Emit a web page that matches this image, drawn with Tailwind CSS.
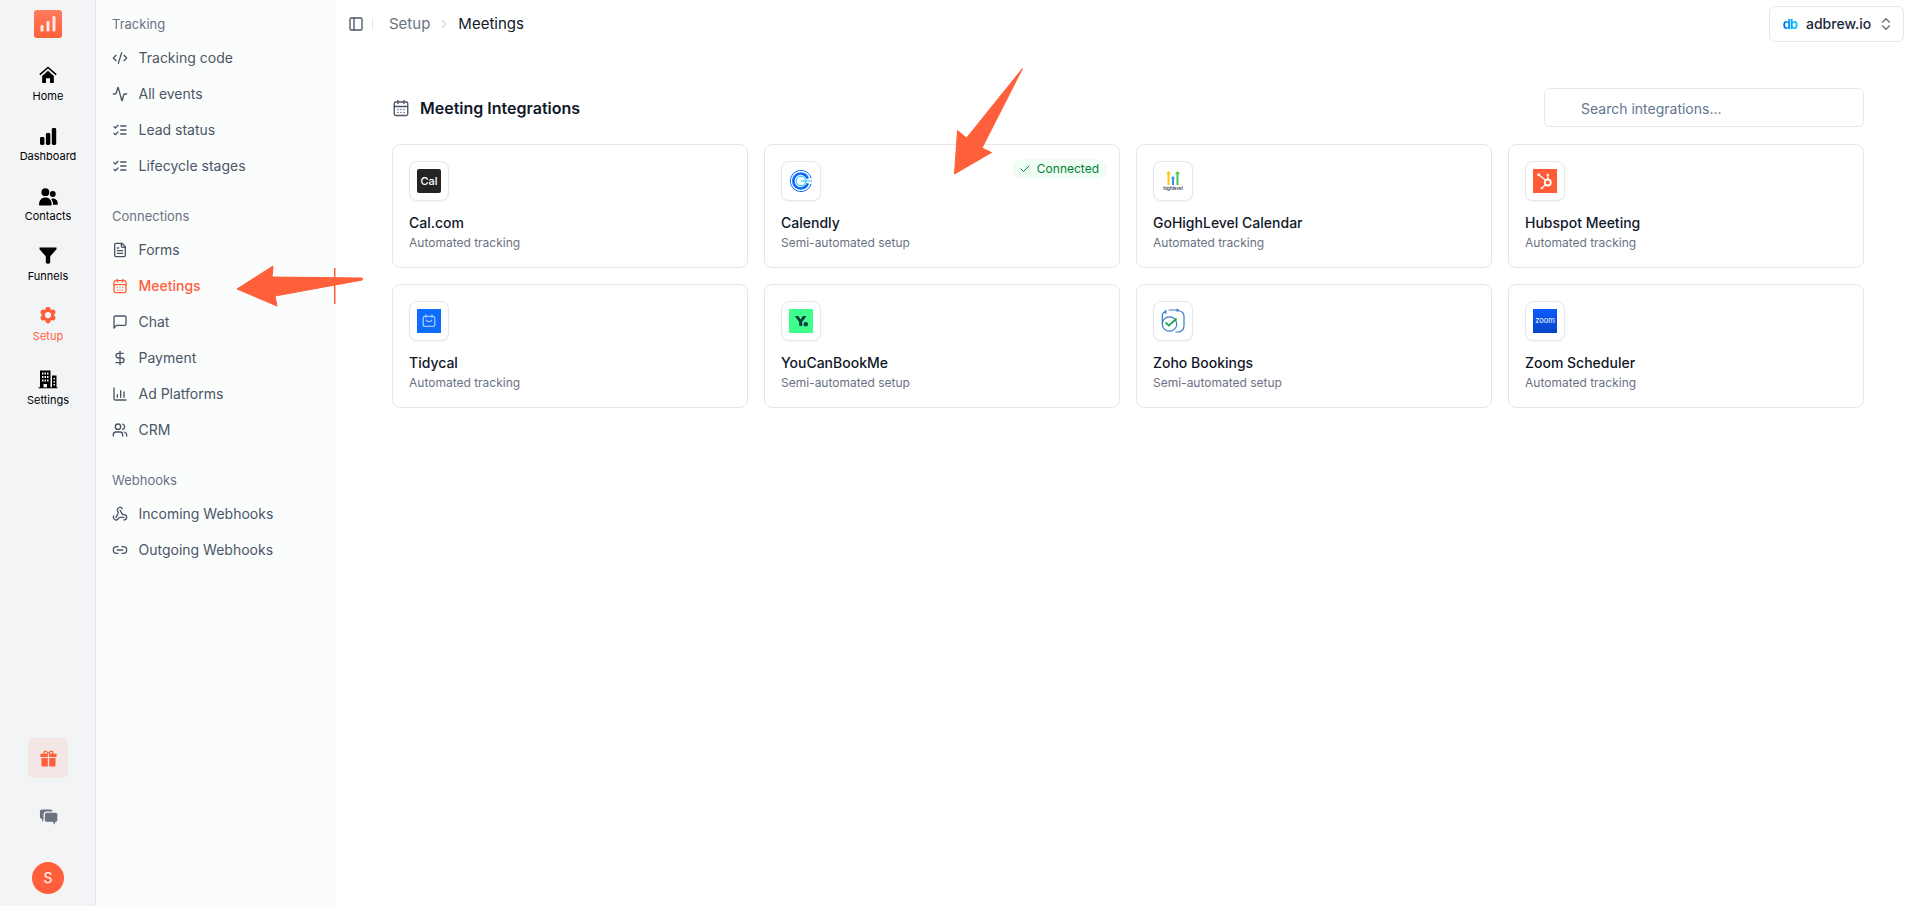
<!DOCTYPE html>
<html lang="en">
<head>
<meta charset="utf-8">
<title>Meetings</title>
<script src="https://cdn.jsdelivr.net/npm/@tailwindcss/browser@4"></script>
</head>
<body class="font-['Inter',sans-serif] bg-white text-gray-900">
<div class="relative flex h-[906px] w-[1920px] overflow-hidden">

  <!-- Icon rail -->
  <aside class="flex h-full w-24 shrink-0 flex-col items-center border-r border-gray-200 bg-[#f3f4f6] pt-[10px] pb-3 pl-px">
    <div class="flex h-7 w-7 items-center justify-center rounded-[3px] bg-linear-to-b from-[#ff7a5c] to-[#ff5f3a]">
      <svg viewBox="0 0 18 18" class="h-[18px] w-[18px]" fill="#ffe9e2"><rect x="1.500" y="10" width="3" height="6.500" rx="1.300"/><rect x="7.500" y="6" width="3" height="10.500" rx="1.300"/><rect x="13.500" y="1" width="3" height="15.500" rx="1.300"/></svg>
    </div>
    <nav class="mt-[27px] flex flex-col items-center text-[11px] leading-4 text-black">
      <a class="flex h-[60px] w-[90px] flex-col items-center">
        <svg viewBox="0 0 24 24" class="h-5 w-5"><path d="M2.200 11.600 12 3l9.800 8.600" fill="none" stroke="#000" stroke-width="1.900"/><path d="M5 13.200 12 7l7 6.200V21.500h-4.600v-5.700H9.600v5.700H5Z"/></svg>
        <span class="mt-[3px]">Home</span>
      </a>
      <a class="flex h-[60px] w-[90px] flex-col items-center">
        <svg viewBox="0 0 20 20" class="mt-0.5 h-5 w-5"><rect x="2" y="10" width="4.400" height="8" rx="1.400"/><rect x="7.900" y="6" width="4.400" height="12" rx="1.400"/><rect x="13.800" y="1" width="4.400" height="17" rx="1.400"/></svg>
        <span class="mt-px">Dashboard</span>
      </a>
      <a class="flex h-[60px] w-[90px] flex-col items-center">
        <svg viewBox="0 0 20 20" class="mt-0.5 h-5 w-5"><circle cx="7.400" cy="5.200" r="3.900"/><circle cx="14.800" cy="7" r="2.900"/><path d="M1 17.600c0-4.400 2.600-7.100 6.400-7.100s6.300 2.700 6.300 7.100c0 .6-.4 1-1 1H2c-.6 0-1-.4-1-1Z"/><path d="M15 17.800h4c.4 0 .8-.3.8-.8 0-3.200-1.800-5.500-4.600-5.500-.8 0-1.500.2-2.100.5 1.300 1.400 2 3.300 2 5.300Z"/></svg>
        <span class="mt-px">Contacts</span>
      </a>
      <a class="flex h-[60px] w-[90px] flex-col items-center">
        <svg viewBox="0 0 20 20" class="h-5 w-5"><path d="M1.500 2.500h17v1.800l-6.300 7v6.200l-1.300 1.200H9.100l-1.300-1.200v-6.200l-6.300-7Z"/></svg>
        <span class="mt-[3px]">Funnels</span>
      </a>
      <a class="flex h-[60px] w-[90px] flex-col items-center text-[#ff5f3a]">
        <svg viewBox="0 0 24 24" class="h-5 w-5" fill="#ff5f3a"><path fill-rule="evenodd" clip-rule="evenodd" d="M11.078 2.250c-.917 0-1.699.663-1.850 1.567L9.050 4.889c-.02.12-.115.26-.297.348a7.493 7.493 0 0 0-.986.57c-.166.115-.334.126-.45.083L6.300 5.508a1.875 1.875 0 0 0-2.282.819l-.922 1.597a1.875 1.875 0 0 0 .432 2.385l.84.692c.095.078.17.229.154.43a7.598 7.598 0 0 0 0 1.139c.015.2-.059.352-.153.43l-.841.692a1.875 1.875 0 0 0-.432 2.385l.922 1.597a1.875 1.875 0 0 0 2.282.818l1.019-.382c.115-.043.283-.031.45.082.312.214.641.405.985.57.182.088.277.228.297.35l.178 1.071c.151.904.933 1.567 1.850 1.567h1.844c.916 0 1.699-.663 1.850-1.567l.178-1.072c.02-.12.114-.26.297-.349.344-.165.673-.356.985-.57.167-.114.335-.125.45-.082l1.020.382a1.875 1.875 0 0 0 2.280-.819l.923-1.597a1.875 1.875 0 0 0-.432-2.385l-.84-.692c-.095-.078-.17-.229-.154-.43a7.614 7.614 0 0 0 0-1.139c-.016-.2.059-.352.153-.43l.84-.692c.708-.582.891-1.590.433-2.385l-.922-1.597a1.875 1.875 0 0 0-2.282-.818l-1.020.382c-.114.043-.282.031-.449-.083a7.490 7.490 0 0 0-.985-.57c-.183-.087-.277-.227-.297-.348l-.179-1.072a1.875 1.875 0 0 0-1.850-1.567h-1.843ZM12 15.750a3.750 3.750 0 1 0 0-7.500 3.750 3.750 0 0 0 0 7.500Z"/></svg>
        <span class="mt-[3px]">Setup</span>
      </a>
      <a class="mt-1 flex h-[60px] w-[90px] flex-col items-center">
        <svg viewBox="0 0 20 20" class="h-5 w-5"><path fill-rule="evenodd" d="M2 1.500h10.500V19H2ZM4 3.500v2h1.500v-2Zm2.500 0v2H8v-2Zm2.500 0v2h1.500v-2ZM4 7v2h1.500V7Zm2.500 0v2H8V7ZM9 7v2h1.500V7ZM4 10.500v2h1.500v-2Zm2.500 0v2H8v-2Zm2.500 0v2h1.500v-2ZM5.500 15v4h3.500v-4Z"/><path fill-rule="evenodd" d="M14 6.500h4.500V19H14Zm1.500 2.500v1.500h1.500V9Zm0 3v1.500h1.500V12Zm0 3v1.500h1.500V15Z"/><rect x=".5" y="18.300" width="19" height="1"/></svg>
        <span class="mt-[3px]">Settings</span>
      </a>
    </nav>
    <div class="mt-auto flex h-10 w-10 items-center justify-center rounded-md bg-[#f5e6e6]">
      <svg viewBox="0 0 20 20" class="h-[19px] w-[19px]" fill="#ff5f3a"><path d="M6.800 1.500C5.300 1.500 4.500 2.700 4.700 3.900c.1.400.2.700.4 1H1.500v3.400h7.800V5h1.400v3.300h7.800V4.900h-3.600c.2-.3.300-.6.400-1 .2-1.200-.6-2.400-2.100-2.400-1.400 0-2.600 1-3.700 2.700C8.900 2.500 8.200 1.500 6.800 1.500Zm0 1.500c.6 0 1.300.6 2 1.900H6.900c-.5 0-.8-.4-.8-1 0-.5.200-.9.700-.9Zm6.400 0c.5 0 .7.400.7.900 0 .6-.3 1-.8 1h-1.900c.7-1.300 1.400-1.900 2-1.900Z"/><path d="M2.600 9.500h6.700V18.500H4.300c-1 0-1.700-.7-1.700-1.700Zm8.100 0h6.700v7.300c0 1-.7 1.700-1.700 1.700h-5Z"/></svg>
    </div>
    <div class="mt-[19px] flex h-10 w-10 items-center justify-center">
      <svg viewBox="0 0 20 20" class="h-[19px] w-[19px]" fill="#6b7280"><path d="M3 1.500h9c1.300 0 2.300 1 2.300 2.200H8c-1.800 0-3.200 1.400-3.200 3.100v5.400l-1 2.800-.7-3.300C1.800 11.600 1 10.700 1 9.600V3.600c0-1.200.9-2.100 2-2.100Z"/><path d="M8 5h9.500c1 0 1.800.8 1.800 1.800v6c0 1-.8 1.800-1.800 1.800h-.5l-.4 2.900-2.400-2.900H8c-1 0-1.800-.8-1.800-1.800v-6C6.200 5.800 7 5 8 5Z"/></svg>
    </div>
    <div class="mt-[25px] flex h-8 w-8 items-center justify-center rounded-full bg-[#ff5f3a] text-sm text-white">S</div>
  </aside>

  <!-- Section sidebar -->
  <aside class="h-full w-[240px] shrink-0 bg-[#fbfdfd] px-4 pt-[14px] text-sm text-gray-600">
    <p class="mb-1.5 h-5 text-[13px] leading-5 text-gray-500">Tracking</p>
    <a class="flex h-9 items-center gap-[10.500px]"><svg viewBox="0 0 24 24" class="h-4 w-4" fill="none" stroke="currentColor" stroke-width="2" stroke-linecap="round" stroke-linejoin="round"><path d="m18 16 4-4-4-4"/><path d="m6 8-4 4 4 4"/><path d="m14.500 4-5 16"/></svg>Tracking code</a>
    <a class="flex h-9 items-center gap-[10.500px]"><svg viewBox="0 0 24 24" class="h-4 w-4" fill="none" stroke="currentColor" stroke-width="2" stroke-linecap="round" stroke-linejoin="round"><path d="M22 12h-2.480a2 2 0 0 0-1.930 1.460l-2.350 8.360a.25.25 0 0 1-.480 0L9.240 2.180a.25.25 0 0 0-.480 0l-2.350 8.360A2 2 0 0 1 4.490 12H2"/></svg>All events</a>
    <a class="flex h-9 items-center gap-[10.500px]"><svg viewBox="0 0 24 24" class="h-4 w-4" fill="none" stroke="currentColor" stroke-width="2" stroke-linecap="round" stroke-linejoin="round"><path d="m3 17 2 2 4-4"/><path d="m3 7 2 2 4-4"/><path d="M13 6h8"/><path d="M13 12h8"/><path d="M13 18h8"/></svg>Lead status</a>
    <a class="flex h-9 items-center gap-[10.500px]"><svg viewBox="0 0 24 24" class="h-4 w-4" fill="none" stroke="currentColor" stroke-width="2" stroke-linecap="round" stroke-linejoin="round"><path d="m3 17 2 2 4-4"/><path d="m3 7 2 2 4-4"/><path d="M13 6h8"/><path d="M13 12h8"/><path d="M13 18h8"/></svg>Lifecycle stages</a>

    <p class="mt-[22px] mb-1.5 h-5 text-[13px] leading-5 text-gray-500">Connections</p>
    <a class="flex h-9 items-center gap-[10.500px]"><svg viewBox="0 0 24 24" class="h-4 w-4" fill="none" stroke="currentColor" stroke-width="2" stroke-linecap="round" stroke-linejoin="round"><path d="M15 2H6a2 2 0 0 0-2 2v16a2 2 0 0 0 2 2h12a2 2 0 0 0 2-2V7Z"/><path d="M14 2v4a2 2 0 0 0 2 2h4"/><path d="M10 9H8"/><path d="M16 13H8"/><path d="M16 17H8"/></svg>Forms</a>
    <a class="flex h-9 items-center gap-[10.500px] font-medium text-[#ff5f3a]"><svg viewBox="0 0 24 24" class="h-4 w-4" fill="none" stroke="currentColor" stroke-width="2" stroke-linecap="round" stroke-linejoin="round"><path d="M8 2v4"/><path d="M16 2v4"/><rect x="3" y="4" width="18" height="18" rx="2"/><path d="M3 10h18"/><path d="M8 14h.01"/><path d="M12 14h.01"/><path d="M16 14h.01"/><path d="M8 18h.01"/><path d="M12 18h.01"/><path d="M16 18h.01"/></svg>Meetings</a>
    <a class="flex h-9 items-center gap-[10.500px]"><svg viewBox="0 0 24 24" class="h-4 w-4" fill="none" stroke="currentColor" stroke-width="2" stroke-linecap="round" stroke-linejoin="round"><path d="M21 15a2 2 0 0 1-2 2H7l-4 4V5a2 2 0 0 1 2-2h14a2 2 0 0 1 2 2z"/></svg>Chat</a>
    <a class="flex h-9 items-center gap-[10.500px]"><svg viewBox="0 0 24 24" class="h-4 w-4" fill="none" stroke="currentColor" stroke-width="2" stroke-linecap="round" stroke-linejoin="round"><path d="M12 2v20"/><path d="M17 5H9.500a3.500 3.500 0 0 0 0 7h5a3.500 3.500 0 0 1 0 7H6"/></svg>Payment</a>
    <a class="flex h-9 items-center gap-[10.500px]"><svg viewBox="0 0 24 24" class="h-4 w-4" fill="none" stroke="currentColor" stroke-width="2" stroke-linecap="round" stroke-linejoin="round"><path d="M3 3v16a2 2 0 0 0 2 2h16"/><path d="M18 17V9"/><path d="M13 17V7"/><path d="M8 17v-4"/></svg>Ad Platforms</a>
    <a class="flex h-9 items-center gap-[10.500px]"><svg viewBox="0 0 24 24" class="h-4 w-4" fill="none" stroke="currentColor" stroke-width="2" stroke-linecap="round" stroke-linejoin="round"><path d="M16 21v-2a4 4 0 0 0-4-4H6a4 4 0 0 0-4 4v2"/><circle cx="9" cy="7" r="4"/><path d="M22 21v-2a4 4 0 0 0-3-3.870"/><path d="M16 3.130a4 4 0 0 1 0 7.750"/></svg>CRM</a>

    <p class="mt-[22px] mb-1.5 h-5 text-[13px] leading-5 text-gray-500">Webhooks</p>
    <a class="flex h-9 items-center gap-[10.500px]"><svg viewBox="0 0 24 24" class="h-4 w-4" fill="none" stroke="currentColor" stroke-width="2" stroke-linecap="round" stroke-linejoin="round"><path d="M18 16.980h-5.990c-1.100 0-1.950.940-2.480 1.900A4 4 0 0 1 2 17c.010-.700.200-1.400.570-2"/><path d="m6 17 3.130-5.780c.530-.970.100-2.180-.500-3.100a4 4 0 1 1 6.890-4.060"/><path d="m12 6 3.130 5.730C15.660 12.700 16.900 13 18 13a4 4 0 0 1 0 8"/></svg>Incoming Webhooks</a>
    <a class="flex h-9 items-center gap-[10.500px]"><svg viewBox="0 0 24 24" class="h-4 w-4" fill="none" stroke="currentColor" stroke-width="2" stroke-linecap="round" stroke-linejoin="round"><path d="M9 17H7A5 5 0 0 1 7 7h2"/><path d="M15 7h2a5 5 0 1 1 0 10h-2"/><path d="M8 12h8"/></svg>Outgoing Webhooks</a>
  </aside>

  <!-- Main -->
  <main class="min-w-0 flex-1 bg-white">
    <header class="flex h-12 items-center pl-3 pr-4">
      <svg viewBox="0 0 24 24" class="h-4 w-4 text-gray-600" fill="none" stroke="currentColor" stroke-width="2" stroke-linecap="round" stroke-linejoin="round"><rect x="3" y="3" width="18" height="18" rx="2"/><path d="M9 3v18"/></svg>
      <span class="ml-2 h-3 w-px bg-gray-200"></span>
      <span class="ml-4 text-[15px] text-gray-500">Setup</span>
      <svg viewBox="0 0 24 24" class="ml-[7px] h-[14px] w-[14px] text-gray-300" fill="none" stroke="currentColor" stroke-width="2" stroke-linecap="round" stroke-linejoin="round"><path d="m9 18 6-6-6-6"/></svg>
      <span class="ml-[7px] text-[15px] text-gray-900">Meetings</span>
      <button class="ml-auto flex h-9 w-[135px] items-center rounded-md border border-gray-200 bg-white pl-[12px] pr-2 text-sm font-medium text-gray-800">
        <span class="w-[16px] bg-linear-to-r from-blue-600 to-cyan-400 bg-clip-text text-[13px] font-bold tracking-[-1px] text-transparent">db</span>
        <span class="ml-[8px]">adbrew.io</span>
        <svg viewBox="0 0 24 24" class="ml-[7px] h-4 w-4 text-gray-500" fill="none" stroke="currentColor" stroke-width="2" stroke-linecap="round" stroke-linejoin="round"><path d="m7 15 5 5 5-5"/><path d="m7 9 5-5 5 5"/></svg>
      </button>
    </header>

    <div class="px-14 pt-10">
      <div class="mb-[17px] flex h-[39px] items-center justify-between">
        <div class="flex items-center gap-2.5">
          <svg viewBox="0 0 24 24" class="h-[18px] w-[18px] text-gray-600" fill="none" stroke="currentColor" stroke-width="1.750" stroke-linecap="round" stroke-linejoin="round"><path d="M8 2v4"/><path d="M16 2v4"/><rect x="3" y="4" width="18" height="18" rx="2"/><path d="M3 10h18"/><path d="M8 14h.01"/><path d="M12 14h.01"/><path d="M16 14h.01"/><path d="M8 18h.01"/><path d="M12 18h.01"/><path d="M16 18h.01"/></svg>
          <h1 class="text-base font-semibold text-gray-900">Meeting Integrations</h1>
        </div>
        <input type="text" placeholder="Search integrations..." class="h-[39px] w-[320px] rounded-md border border-gray-200 bg-white pl-9 pt-[2px] text-sm outline-none placeholder:text-slate-500">
      </div>

      <div class="grid grid-cols-4 gap-x-4 gap-y-[16.500px]">
        <!-- Cal.com -->
        <div class="h-[123.500px] rounded-lg border border-gray-200 bg-white px-4 pt-4">
          <div class="flex h-10 w-10 items-center justify-center rounded-lg border border-gray-200 bg-white shadow-xs">
            <span class="flex h-6 w-6 items-center justify-center rounded-[2px] bg-[#242424] text-[11px] font-medium text-white">Cal</span>
          </div>
          <p class="mt-3 text-sm font-medium text-gray-900">Cal.com</p>
          <p class="mt-0.5 text-xs text-gray-500">Automated tracking</p>
        </div>
        <!-- Calendly -->
        <div class="relative h-[123.500px] rounded-lg border border-gray-200 bg-white px-4 pt-4">
          <div class="flex h-10 w-10 items-center justify-center rounded-lg border border-gray-200 bg-white shadow-xs">
            <svg viewBox="0 0 24 24" class="h-6 w-6" fill="none"><path d="M22.200 9.300A10.600 10.600 0 1 0 22.200 14.700" stroke="#0b6bff" stroke-width="1"/><path d="M18.800 9.700A7.400 7.400 0 1 0 18.800 14.300" stroke="#0b6bff" stroke-width="2.600"/><circle cx="12" cy="12" r="4.800" stroke="#12c8f0" stroke-width="1"/><path d="M12 12h11" stroke="#12c8f0" stroke-width="1"/></svg>
          </div>
          <span class="absolute right-3 top-3.5 flex h-5 items-center gap-1.5 rounded-full bg-[#f0fdf4] pl-[7px] pr-2 text-xs text-green-700">
            <svg viewBox="0 0 24 24" class="h-3 w-3" fill="none" stroke="currentColor" stroke-width="2" stroke-linecap="round" stroke-linejoin="round"><path d="M20 6 9 17l-5-5"/></svg>Connected</span>
          <p class="mt-3 text-sm font-medium text-gray-900">Calendly</p>
          <p class="mt-0.5 text-xs text-gray-500">Semi-automated setup</p>
        </div>
        <!-- GoHighLevel -->
        <div class="h-[123.500px] rounded-lg border border-gray-200 bg-white px-4 pt-4">
          <div class="flex h-10 w-10 flex-col items-center justify-center rounded-lg border border-gray-200 bg-white shadow-xs">
            <svg viewBox="0 0 16 14" class="h-[14px] w-[16px]"><path d="M3.500 0 6 3H4.500v11h-2V3H1Z" fill="#fdc20f"/><path d="M12.500 0 15 3h-1.500v11h-2V3H10Z" fill="#4fc24a"/><path d="M8 5l2.300 2.600H9V14H7V7.600H5.700Z" fill="#3f8ef5"/></svg>
            <span class="mt-px text-[4.500px] leading-[6px] font-semibold text-gray-700">highlevel</span>
          </div>
          <p class="mt-3 text-sm font-medium text-gray-900">GoHighLevel Calendar</p>
          <p class="mt-0.5 text-xs text-gray-500">Automated tracking</p>
        </div>
        <!-- Hubspot -->
        <div class="h-[123.500px] rounded-lg border border-gray-200 bg-white px-4 pt-4">
          <div class="flex h-10 w-10 items-center justify-center rounded-lg border border-gray-200 bg-white shadow-xs">
            <span class="flex h-6 w-6 items-center justify-center bg-[#ff5c35]">
              <svg viewBox="0 0 24 24" class="h-6 w-6" fill="none" stroke="#fff"><circle cx="14.800" cy="13.500" r="3" stroke-width="1.800"/><path d="M6 6l6.700 5.300M14.800 6.500v4M12.500 15.800 9 19" stroke-width="1.200"/><circle cx="5.800" cy="5.800" r="1.500" fill="#fff" stroke="none"/><circle cx="14.800" cy="6" r="1.200" fill="#fff" stroke="none"/><circle cx="8.800" cy="19.200" r="1.100" fill="#fff" stroke="none"/></svg>
            </span>
          </div>
          <p class="mt-3 text-sm font-medium text-gray-900">Hubspot Meeting</p>
          <p class="mt-0.5 text-xs text-gray-500">Automated tracking</p>
        </div>
        <!-- Tidycal -->
        <div class="h-[123.500px] rounded-lg border border-gray-200 bg-white px-4 pt-4">
          <div class="flex h-10 w-10 items-center justify-center rounded-lg border border-gray-200 bg-white shadow-xs">
            <span class="flex h-6 w-6 items-center justify-center bg-[#0c6cff]">
              <svg viewBox="0 0 24 24" class="h-6 w-6" fill="none" stroke="#a9c8ff" stroke-width="1.300" stroke-linecap="round"><rect x="6.200" y="7.400" width="11.600" height="10" rx="1.600"/><path d="M9 6v2.200M15 6v2.200M9.300 11.200c.8 1.800 4.600 1.800 5.400 0"/></svg>
            </span>
          </div>
          <p class="mt-3 text-sm font-medium text-gray-900">Tidycal</p>
          <p class="mt-0.5 text-xs text-gray-500">Automated tracking</p>
        </div>
        <!-- YouCanBookMe -->
        <div class="h-[123.500px] rounded-lg border border-gray-200 bg-white px-4 pt-4">
          <div class="flex h-10 w-10 items-center justify-center rounded-lg border border-gray-200 bg-white shadow-xs">
            <span class="flex h-6 w-6 items-center justify-center bg-[#3fff8c]">
              <svg viewBox="0 0 24 24" class="h-6 w-6" fill="#0c3b3f"><path d="M5.800 7h3.500l2.400 3.600L14 7h3.500l-4.300 6v4h-3v-4Z"/><circle cx="16.800" cy="15.200" r="2.200"/></svg>
            </span>
          </div>
          <p class="mt-3 text-sm font-medium text-gray-900">YouCanBookMe</p>
          <p class="mt-0.5 text-xs text-gray-500">Semi-automated setup</p>
        </div>
        <!-- Zoho -->
        <div class="h-[123.500px] rounded-lg border border-gray-200 bg-white px-4 pt-4">
          <div class="flex h-10 w-10 items-center justify-center rounded-lg border border-gray-200 bg-white shadow-xs">
            <svg viewBox="0 0 24 24" class="h-6 w-6" fill="none" stroke="#3b7cc6" stroke-width="1.200" stroke-linecap="round"><circle cx="8.500" cy="15" r="7.200"/><path d="M1.300 14V7a4.500 4.500 0 0 1 3.700-4.400M8 1h9M16 .2l1.500 1-1.500 1M18 2a5 5 0 0 1 5 5V17a6 6 0 0 1-6 6h-2M5 4 3.600 2.700 5 1.300"/><path d="M5 13.800l2.800 2.800L15 10" stroke="#16a34a" stroke-width="1.700"/></svg>
          </div>
          <p class="mt-3 text-sm font-medium text-gray-900">Zoho Bookings</p>
          <p class="mt-0.5 text-xs text-gray-500">Semi-automated setup</p>
        </div>
        <!-- Zoom -->
        <div class="h-[123.500px] rounded-lg border border-gray-200 bg-white px-4 pt-4">
          <div class="flex h-10 w-10 items-center justify-center rounded-lg border border-gray-200 bg-white shadow-xs">
            <span class="flex h-6 w-6 items-center justify-center bg-linear-to-b from-[#0b5cff] to-[#0845c4] text-[7.500px] text-white">zoom</span>
          </div>
          <p class="mt-3 text-sm font-medium text-gray-900">Zoom Scheduler</p>
          <p class="mt-0.5 text-xs text-gray-500">Automated tracking</p>
        </div>
      </div>
    </div>
  </main>

  <!-- Annotation arrows drawn over the page -->
  <svg viewBox="0 0 1920 906" class="pointer-events-none absolute inset-0 h-[906px] w-[1920px]" fill="#ff5f3a">
    <path d="M237 289 273 266 272 277 362 278 362.500 280 275 296 277 306Z" stroke="#ff5f3a" stroke-linejoin="round"/>
    <rect x="334" y="268" width="1.500" height="36"/>
    <path d="M1022.500 68.500 982 148 991.500 152.500 954.500 174 957.500 130.500 966.500 138Z" stroke="#ff5f3a" stroke-linejoin="round"/>
  </svg>
</div>
</body>
</html>
